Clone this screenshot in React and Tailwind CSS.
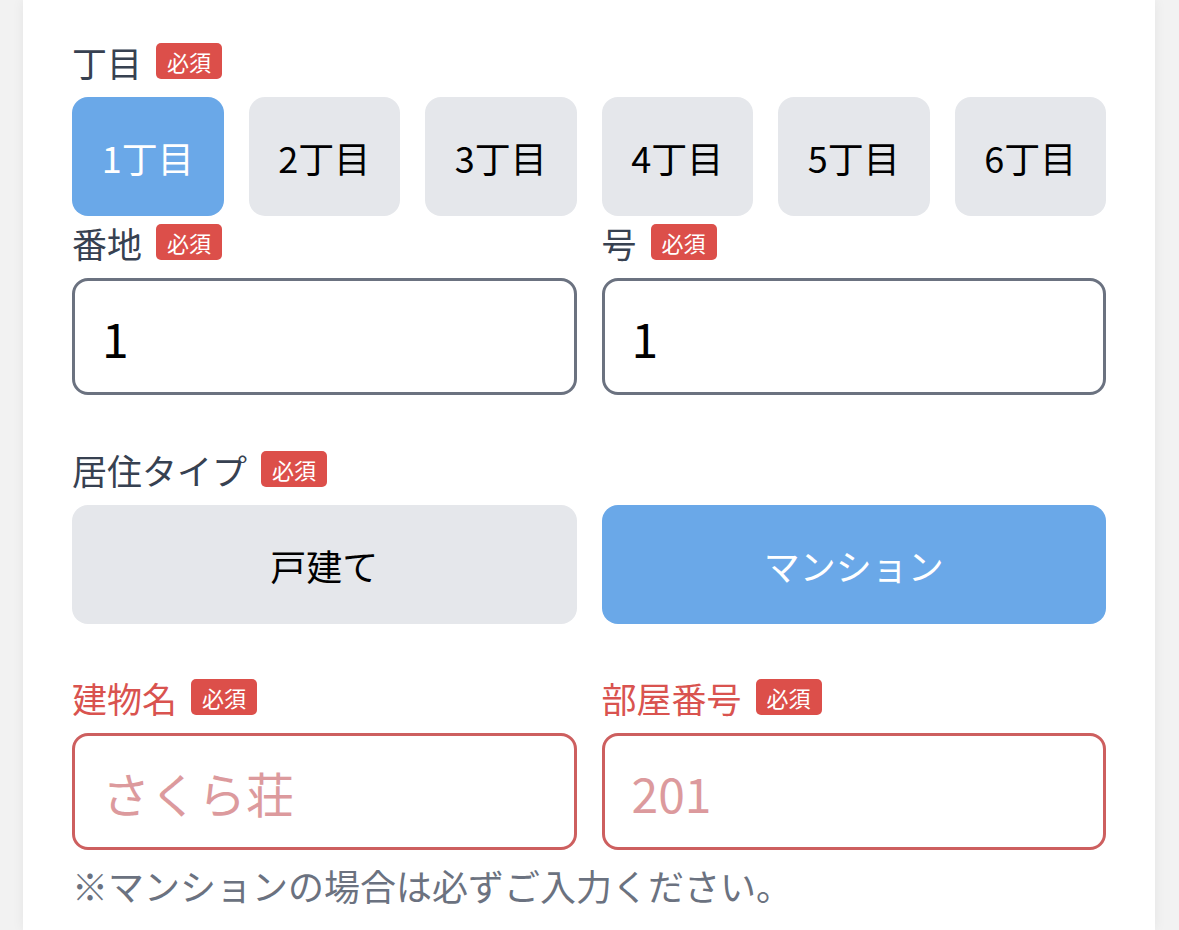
import { useState } from 'react';

const font = { fontFamily: '"Noto Sans CJK JP", "Noto Sans", sans-serif' };

function Required() {
  return (
    <span className="ml-[14px] inline-flex h-[36px] items-center rounded-[5px] bg-[#dc4f4a] px-[11px] text-[22px] font-normal leading-none text-white">
      必須
    </span>
  );
}

function Label({ children, error }) {
  return (
    <div
      className={`mb-[14px] flex h-[44px] items-center text-[35px] font-normal leading-none ${
        error ? 'text-[#d9534f]' : 'text-[#374151]'
      }`}
    >
      {children}
      <Required />
    </div>
  );
}

function Choice({ active, children, onClick }) {
  return (
    <button
      type="button"
      onClick={onClick}
      className={`flex h-[119px] items-center justify-center rounded-[16px] text-[36px] ${
        active ? 'bg-[#6aa8e8] text-white' : 'bg-[#e5e7eb] text-black'
      }`}
    >
      {children}
    </button>
  );
}

function TextField({ value, placeholder, error, onChange }) {
  return (
    <input
      value={value}
      placeholder={placeholder}
      onChange={(e) => onChange(e.target.value)}
      className={`h-[117px] w-full rounded-[16px] border-[3px] bg-white px-[27px] text-[48px] font-normal text-black outline-none ${
        error
          ? 'border-[#cd5f5f] placeholder:text-[#dc9a9d]'
          : 'border-[#6b7280] placeholder:text-gray-400'
      }`}
      style={font}
    />
  );
}

export default function App() {
  const [chome, setChome] = useState(1);
  const [banchi, setBanchi] = useState('1');
  const [go, setGo] = useState('1');
  const [type, setType] = useState('mansion');
  const [building, setBuilding] = useState('');
  const [room, setRoom] = useState('');

  return (
    <div className="min-h-screen bg-[#f2f2f2]" style={font}>
      <div className="ml-[23px] min-h-screen w-[1132px] bg-white px-[49px] pt-[39px] shadow-[0_0_12px_rgba(0,0,0,0.06)]">
        <Label>丁目</Label>
        <div className="mb-[4px] grid grid-cols-6 gap-[25px]">
          {[1, 2, 3, 4, 5, 6].map((n) => (
            <Choice key={n} active={chome === n} onClick={() => setChome(n)}>
              {n}丁目
            </Choice>
          ))}
        </div>

        <div className="mb-[52px] grid grid-cols-2 gap-[25px]">
          <div>
            <Label>番地</Label>
            <TextField value={banchi} onChange={setBanchi} />
          </div>
          <div>
            <Label>号</Label>
            <TextField value={go} onChange={setGo} />
          </div>
        </div>

        <Label>居住タイプ</Label>
        <div className="mb-[51px] grid grid-cols-2 gap-[25px]">
          <Choice active={type === 'house'} onClick={() => setType('house')}>
            戸建て
          </Choice>
          <Choice active={type === 'mansion'} onClick={() => setType('mansion')}>
            マンション
          </Choice>
        </div>

        <div className="grid grid-cols-2 gap-[25px]">
          <div>
            <Label error>建物名</Label>
            <TextField value={building} placeholder="さくら荘" error onChange={setBuilding} />
          </div>
          <div>
            <Label error>部屋番号</Label>
            <TextField value={room} placeholder="201" error onChange={setRoom} />
          </div>
        </div>
        <p className="mt-[13px] text-[36px] leading-[44px] text-[#6b7280]">
          ※マンションの場合は必ずご入力ください。
        </p>
      </div>
    </div>
  );
}
